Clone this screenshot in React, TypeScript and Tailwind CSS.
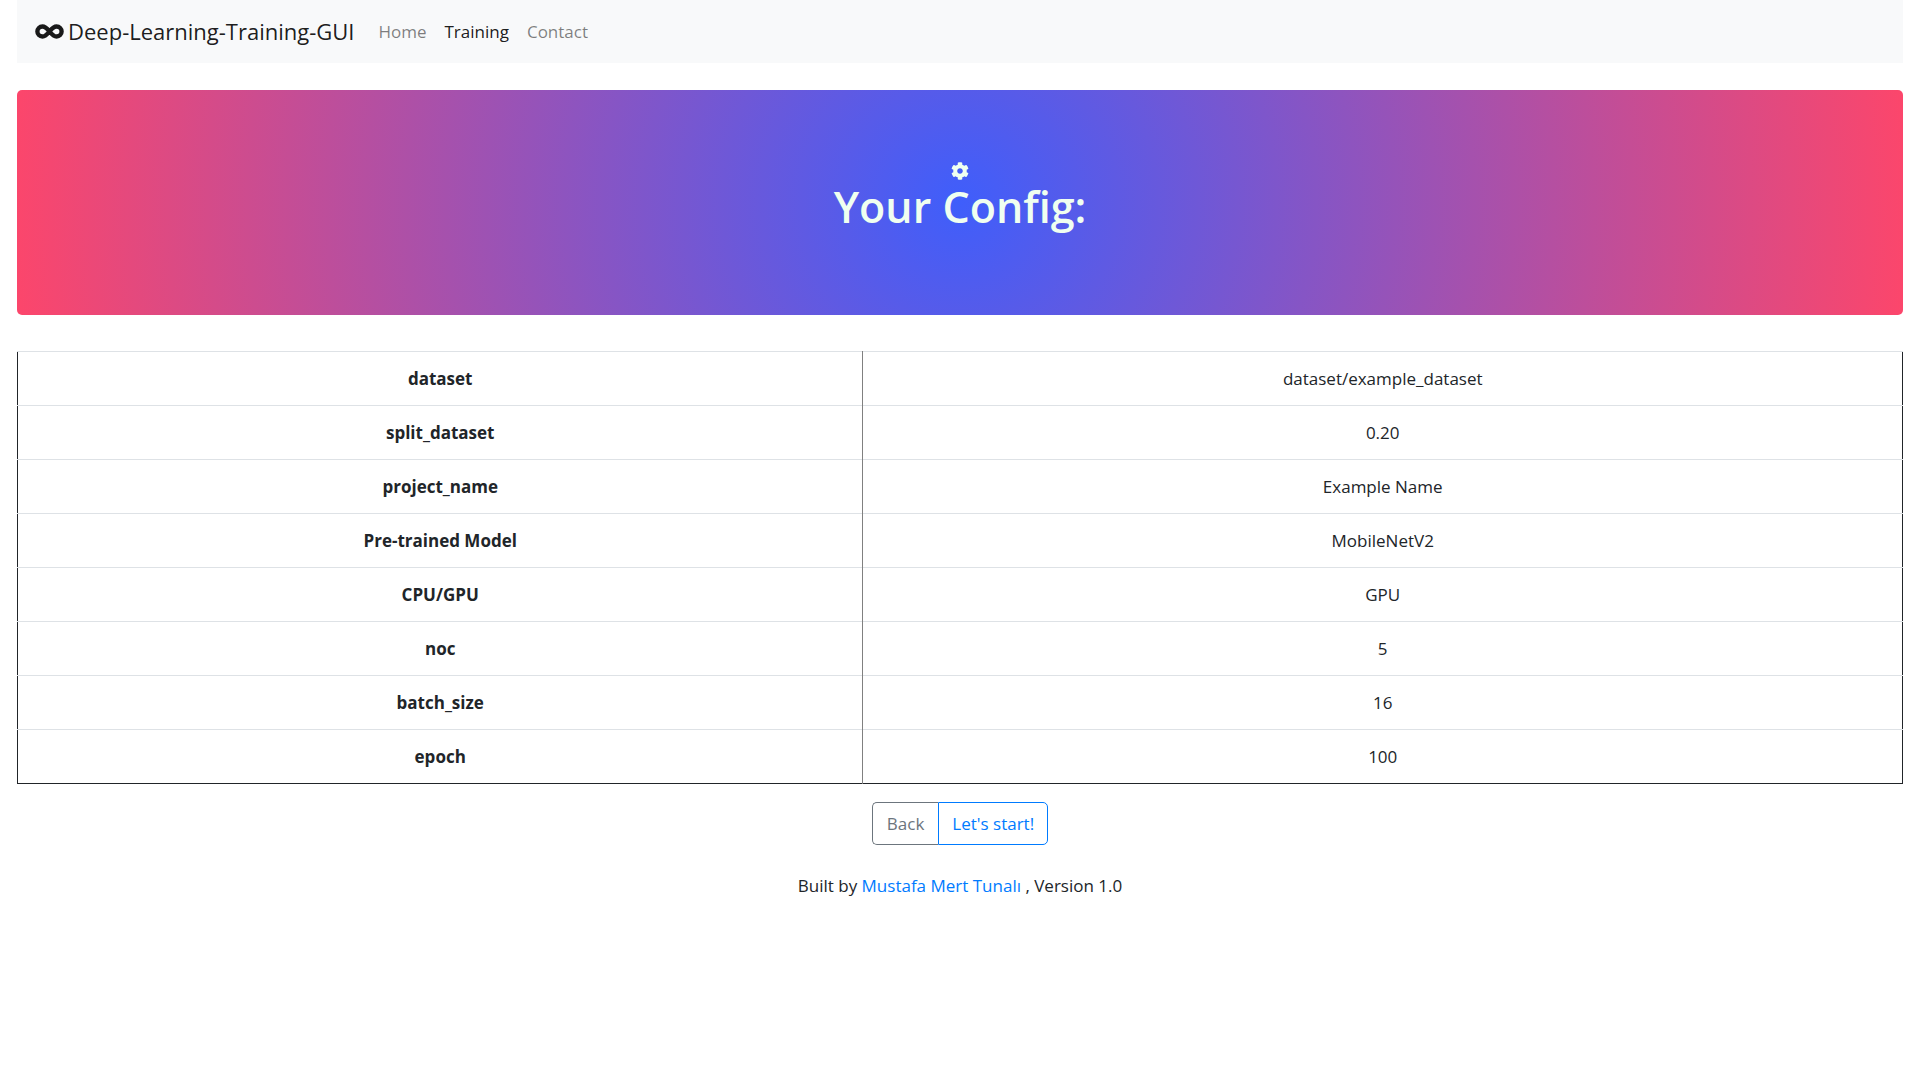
import { FaCog } from "react-icons/fa";

const config = [
  { label: "dataset", value: "dataset/example_dataset" },
  { label: "split_dataset", value: "0.20" },
  { label: "project_name", value: "Example Name" },
  { label: "Pre-trained Model", value: "MobileNetV2" },
  { label: "CPU/GPU", value: "GPU" },
  { label: "noc", value: "5" },
  { label: "batch_size", value: "16" },
  { label: "epoch", value: "100" },
];

function InfinityIcon() {
  return (
    <svg viewBox="0 0 29 15" aria-hidden="true" className="h-[15px] w-[29px]" fill="none" stroke="currentColor" strokeWidth="4.4">
      <path d="M14.5 7.5C12 4.3 10 2.5 7.4 2.5a5 5 0 0 0 0 10C10 12.5 12 10.7 14.5 7.5C17 4.3 19 2.5 21.6 2.5a5 5 0 0 1 0 10C19 12.5 17 10.7 14.5 7.5z" />
    </svg>
  );
}

function Navbar() {
  return (
    <nav className="flex h-[63px] items-center bg-[#f8f9fa] px-[18px]">
      <a href="#" className="mr-6 flex items-center gap-1 text-[22px] text-black/90">
        <InfinityIcon />
        <span>Deep-Learning-Training-GUI</span>
      </a>
      <ul className="flex gap-[18px]">
        <li><a href="#" className="text-black/50">Home</a></li>
        <li><a href="#" aria-current="page" className="text-black/90">Training</a></li>
        <li><a href="#" className="text-black/50">Contact</a></li>
      </ul>
    </nav>
  );
}

function Banner() {
  return (
    <header className="mt-[27px] flex h-[225px] flex-col items-center rounded-[5px] bg-[radial-gradient(circle,#3f5efb_0%,#fc466b_100%)] pt-[72px] text-[#f0fff0]">
      <FaCog className="size-[18px]" />
      <h1 className="text-[43px] leading-[54px] font-semibold">Your Config:</h1>
    </header>
  );
}

function ConfigTable() {
  return (
    <table className="mt-9 w-full border-collapse border border-[#212529] text-center">
      <tbody>
        {config.map(({ label, value }) => (
          <tr key={label} className="h-[54px]">
            <th scope="row" className="w-[44.85%] border-t border-r border-t-[#dee2e6] border-r-[#808080] font-bold">{label}</th>
            <td className="border-t border-t-[#dee2e6]">{value}</td>
          </tr>
        ))}
      </tbody>
    </table>
  );
}

export default function App() {
  return (
    <div className="min-h-screen bg-white pr-2 pl-[17px] font-['Open_Sans','Noto_Sans',sans-serif] text-[17px] leading-[27px] text-[#212529]">
      <Navbar />
      <main>
        <Banner />
        <ConfigTable />
        <div className="mt-[18px] flex justify-center">
          <button type="button" className="h-[43px] rounded-l-[5px] border border-r-0 border-[#6c757d] px-[14px] text-[#6c757d]">Back</button>
          <button type="button" className="h-[43px] rounded-r-[5px] border border-[#007bff] px-[13px] text-[#007bff]">Let's start!</button>
        </div>
      </main>
      <footer className="mt-[27px] text-center">
        Built by <a href="#" className="text-[#007bff]">Mustafa Mert Tunalı</a> , Version 1.0
      </footer>
    </div>
  );
}
